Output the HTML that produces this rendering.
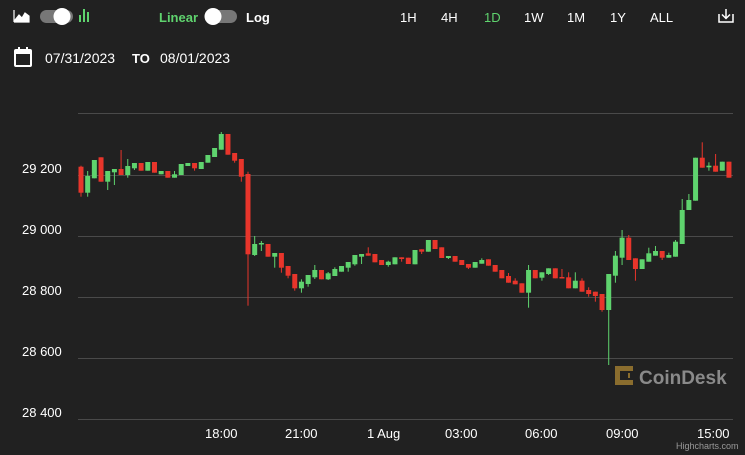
<!DOCTYPE html>
<html><head><meta charset="utf-8"><style>
html,body{margin:0;padding:0;background:#212121;width:745px;height:455px;overflow:hidden;font-family:"Liberation Sans",sans-serif;color:#fff}
.t{position:absolute;white-space:nowrap}
</style></head><body>
<svg width="745" height="455" style="position:absolute;left:0;top:0" id="s">
<!-- header icons -->
<path d="M14 22 V10 M14 22 H29 M15 20 L19 15 L22 18 L25 13 L29 16 V22 H15Z" fill="#fff" stroke="#fff" stroke-width="1.2"/>
<rect x="40" y="10" width="33" height="13" rx="6.5" fill="#777"/>
<circle cx="62" cy="16.5" r="8.5" fill="#fff"/>
<g fill="#5fd36e"><rect x="79" y="15" width="2" height="7"/><rect x="83" y="9" width="2" height="13"/><rect x="87" y="12" width="2" height="10"/></g>
<rect x="205" y="10" width="32" height="13" rx="6.5" fill="#777"/>
<circle cx="213" cy="16.5" r="8.5" fill="#fff"/>
<path d="M719 14 V22 H733 V14 M726 9 V18 M722 14.5 L726 18.5 L730 14.5" fill="none" stroke="#fff" stroke-width="1.5"/>
<rect x="15" y="50" width="16" height="16" rx="1" fill="none" stroke="#fff" stroke-width="2"/>
<rect x="15" y="50" width="16" height="4" fill="#fff"/>
<rect x="18" y="47" width="2" height="4" fill="#fff"/><rect x="26" y="47" width="2" height="4" fill="#fff"/>
<!-- grid -->
<g stroke="#4a4a4a" stroke-width="1">
<line x1="78" y1="113.5" x2="733" y2="113.5"/><line x1="78" y1="175.5" x2="733" y2="175.5"/>
<line x1="78" y1="236.5" x2="733" y2="236.5"/><line x1="78" y1="297.5" x2="733" y2="297.5"/>
<line x1="78" y1="358.5" x2="733" y2="358.5"/><line x1="78" y1="419.5" x2="733" y2="419.5"/>
</g>
<!-- coindesk logo -->
<g fill="#8a6d2e"><rect x="615" y="366" width="5" height="19"/><rect x="615" y="366" width="18" height="5"/><rect x="615" y="380" width="18" height="5"/><rect x="628" y="373" width="2" height="5"/></g>
<text x="639" y="384" font-family="Liberation Sans" font-weight="bold" font-size="19" fill="#8a8a8a">CoinDesk</text>
<g id="c"></g>
</svg>
<div class="t" style="left:159px;top:10px;font-size:13px;font-weight:bold;color:#5fd36e">Linear</div>
<div class="t" style="left:246px;top:10px;font-size:13px;font-weight:bold">Log</div>
<div class="t" style="left:400px;top:10px;font-size:13px">1H</div>
<div class="t" style="left:441px;top:10px;font-size:13px">4H</div>
<div class="t" style="left:484px;top:10px;font-size:13px;color:#5fd36e">1D</div>
<div class="t" style="left:524px;top:10px;font-size:13px">1W</div>
<div class="t" style="left:567px;top:10px;font-size:13px">1M</div>
<div class="t" style="left:610px;top:10px;font-size:13px">1Y</div>
<div class="t" style="left:650px;top:10px;font-size:13px">ALL</div>
<div class="t" style="left:45px;top:50px;font-size:14px">07/31/2023</div>
<div class="t" style="left:132px;top:51px;font-size:13px;font-weight:bold">TO</div>
<div class="t" style="left:160px;top:50px;font-size:14px">08/01/2023</div>
<div class="t" style="left:22px;top:161px;font-size:13px">29 200</div>
<div class="t" style="left:22px;top:222px;font-size:13px">29 000</div>
<div class="t" style="left:22px;top:283px;font-size:13px">28 800</div>
<div class="t" style="left:22px;top:344px;font-size:13px">28 600</div>
<div class="t" style="left:22px;top:405px;font-size:13px">28 400</div>
<div class="t" style="left:205px;top:426px;font-size:13px">18:00</div>
<div class="t" style="left:285px;top:426px;font-size:13px">21:00</div>
<div class="t" style="left:367px;top:426px;font-size:13px">1 Aug</div>
<div class="t" style="left:445px;top:426px;font-size:13px">03:00</div>
<div class="t" style="left:525px;top:426px;font-size:13px">06:00</div>
<div class="t" style="left:606px;top:426px;font-size:13px">09:00</div>
<div class="t" style="left:697px;top:426px;font-size:13px">15:00</div>
<div class="t" style="left:676px;top:441px;font-size:9px;color:#999">Highcharts.com</div>
<script>
var G="#5fd36e",R="#e8352b";
var d=[
[R,166.7,192.7,165.7,196.7],[G,176,192.7,171,196.7],[G,160,178.3],[R,157.3,181.7],[G,171,181.7,171,190],
[G,169,172.3,169,185],[R,169,175,150,175],[G,166,175,159,177.7],[G,163,168.3,163,170],[R,163,170.7],
[G,162,170.7],[R,162,172.7],[G,171,174.3],[R,171,177.7],[G,174.3,177.7,171,177.7],[G,164,175],[G,163,166],
[R,163,168.3,163,170.7],[G,162,169],[G,155,162.7],[G,148,157],[G,134,149.7,132,149.7],[R,134,154.7],
[R,153,160.7,153,162.7],[R,159,176.7,159,181.7],[R,174,254.3,171.7,305.7],[G,244,255,236,256],[G,243,244.5,241,251],
[R,244,256.7],[G,253,256.7,253,267.7],[R,253,267.7,253,272.7],[R,266,275.7,266,278.3],[R,274,288.3,274,290.7],
[G,281.7,288.3,279.3,292.7],[G,275,284,275,286.7],[G,270,277.3,265,279],[R,270,279.3],[G,273.3,279.3,272,280],
[G,269,276,267.3,276],[G,266,271.7],[G,262,267.7,262,271.7],[G,255,264.3,255,265.7],[G,254,256.7,254,264],
[R,253.3,255.7,247.3,255.7],[R,254,262.3],[R,260,265],[G,261.7,265,260.7,266.7],[G,257.3,264.3],[R,257.3,259,257.3,261.7],
[R,257.7,264],[G,250,264.3],[R,249.3,251.7,249.3,254],[G,240,251.7],[R,240,249],[R,247.3,258],[G,256,258,256,259],
[R,256,261.7],[R,260,265],[R,264,267.7,264,269],[G,262,267.7],[G,260,263.7,258.3,263.7],[R,259.3,265.7],[R,265,271.7],
[R,270,278.3],[R,276,282.7,273,282.7],[R,280.7,284.3,278.3,284.3],[R,283.3,292.7],[G,270,292.7,265,307.7],[R,270,278.3],
[G,272.3,277.7,272.3,280.7],[G,268.3,274,268.3,275],[R,268.3,278.3],[R,277,278.3,269,278.3],[R,277.3,288.3,272.3,288.3],
[G,280.7,288.3,272.3,288.3],[R,280.7,291.7,278.3,291.7],[R,290,294,287.3,296.7],[R,291.7,296,291.7,301.7],[R,294,310,294,311.7],
[G,274,310,274,365],[G,255.7,275.7,251,282.7],[G,237.7,257.7,230,265],[R,237.7,260,235,260],[R,258.3,269,258.3,280.7],
[G,259.3,269],[G,253.3,261.7,247.7,261.7],[G,251,255.7,246,255.7],[R,251,257.7,251,260],[G,255,257.7,252.7,257.7],
[G,241.7,256.7,240,256.7],[G,210,244,199,244],[G,200,210,194,210],[G,157.7,200.7],[R,157.7,167.7,142.3,167.7],
[G,165.7,167.3,162.3,170.7],[R,165.7,171.7,154,171.7],[G,161.7,170.7],[R,161.7,177.7]];
var s="";
d.forEach(function(c,i){var x=81+i*6.68,t=c[1],b=c[2],wt=c.length>3?c[3]:t,wb=c.length>4?c[4]:b;
s+='<rect x="'+(x-0.5)+'" y="'+wt+'" width="1" height="'+(wb-wt)+'" fill="'+c[0]+'"/>';
s+='<rect x="'+(x-2.5)+'" y="'+t+'" width="5" height="'+Math.max(1.5,b-t)+'" fill="'+c[0]+'"/>';});
document.getElementById("c").innerHTML=s;
</script>
</body></html>
